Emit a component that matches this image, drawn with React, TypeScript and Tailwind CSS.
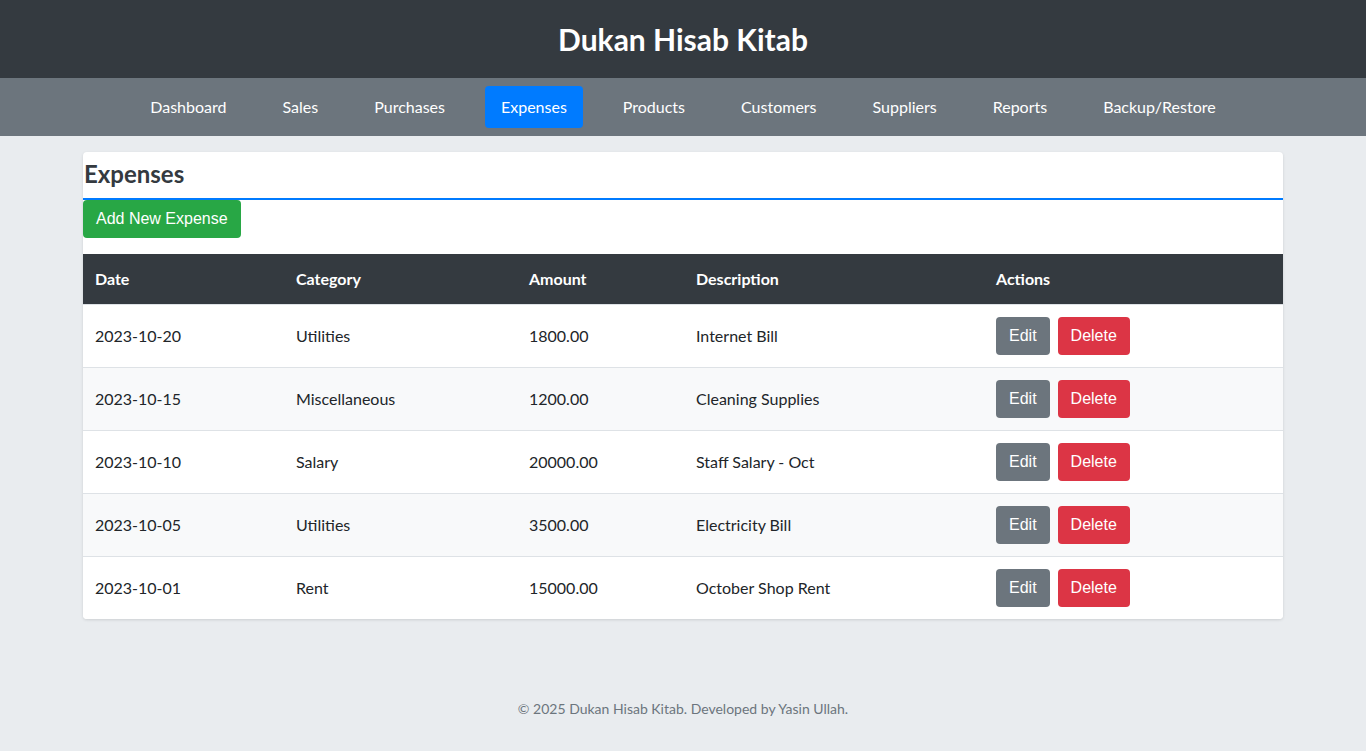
import React from 'react'

const navItems = [
  'Dashboard',
  'Sales',
  'Purchases',
  'Expenses',
  'Products',
  'Customers',
  'Suppliers',
  'Reports',
  'Backup/Restore',
]

const expenses = [
  { date: '2023-10-20', category: 'Utilities', amount: '1800.00', description: 'Internet Bill' },
  { date: '2023-10-15', category: 'Miscellaneous', amount: '1200.00', description: 'Cleaning Supplies' },
  { date: '2023-10-10', category: 'Salary', amount: '20000.00', description: 'Staff Salary - Oct' },
  { date: '2023-10-05', category: 'Utilities', amount: '3500.00', description: 'Electricity Bill' },
  { date: '2023-10-01', category: 'Rent', amount: '15000.00', description: 'October Shop Rent' },
]

const cols = 'grid grid-cols-[201px_233px_167px_300px_1fr]'

function ExpenseRow(props) {
  const item = props.item
  return (
    <div
      className={`${cols} h-[63px] items-center border-t border-[#dee2e6] text-[16px] text-[#212529] ${
        props.index % 2 === 1 ? 'bg-[#f8f9fa]' : 'bg-white'
      }`}
    >
      <div className="px-3">{item.date}</div>
      <div className="px-3">{item.category}</div>
      <div className="px-3">{item.amount}</div>
      <div className="px-3">{item.description}</div>
      <div className="flex gap-2 px-3 font-['Liberation_Sans',Arial,sans-serif]">
        <button className="h-[38px] rounded bg-[#6c757d] px-[13px] text-[16px] text-white">
          Edit
        </button>
        <button className="h-[38px] rounded bg-[#dc3545] px-[13px] text-[16px] text-white">
          Delete
        </button>
      </div>
    </div>
  )
}

export default function App() {
  return (
    <div className="flex min-h-[751px] flex-col bg-[#e9ecef] font-['Lato','Noto_Sans',sans-serif]">
      <header className="flex h-[78px] items-center justify-center bg-[#343a40]">
        <h1 className="text-[30px] font-bold text-white">Dukan Hisab Kitab</h1>
      </header>

      <nav className="flex h-[58px] items-center justify-center gap-6 bg-[#6c757d]">
        {navItems.map((name) => (
          <a
            key={name}
            className={`flex h-[42px] items-center rounded px-4 text-[16px] text-white ${
              name === 'Expenses' ? 'bg-[#007bff]' : ''
            }`}
          >
            {name}
          </a>
        ))}
      </nav>

      <main className="mx-auto mt-4 w-[1200px] overflow-hidden rounded bg-white shadow-[0_1px_3px_rgba(0,0,0,0.12)]">
        <h2 className="border-b-2 border-[#007bff] px-px pt-[4px] pb-[6px] text-[24px] font-bold text-[#343a40]">
          Expenses
        </h2>
        <button className="h-[38px] rounded bg-[#28a745] px-[13px] font-['Liberation_Sans',Arial,sans-serif] text-[16px] text-white">
          Add New Expense
        </button>

        <div className="mt-4">
          <div className={`${cols} h-[50px] items-center bg-[#343a40] text-[16px] font-bold text-white`}>
            <div className="px-3">Date</div>
            <div className="px-3">Category</div>
            <div className="px-3">Amount</div>
            <div className="px-3">Description</div>
            <div className="px-3">Actions</div>
          </div>
          {expenses.map((item, index) => (
            <ExpenseRow key={item.date} item={item} index={index} />
          ))}
        </div>
      </main>

      <footer className="mt-[79px] text-center text-[14px] text-[#6c757d]">
        © 2025 Dukan Hisab Kitab. Developed by Yasin Ullah.
      </footer>
    </div>
  )
}
